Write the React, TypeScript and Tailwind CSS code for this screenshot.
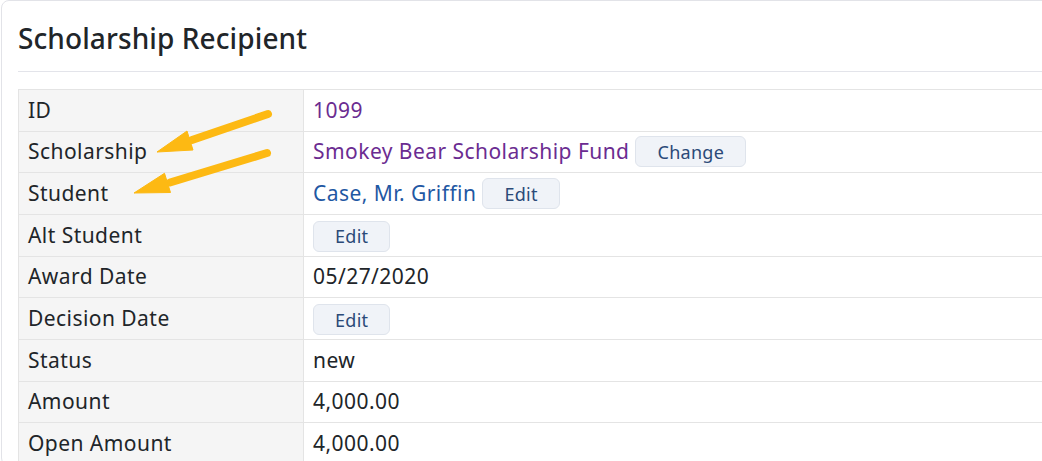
import React from 'react';

type Row = { label: string; value: React.ReactNode };

const EditButton = ({ children }: { children: React.ReactNode }) => (
  <button className="h-[31px] px-[21px] rounded-md border border-[#dfe4ec] bg-[#f0f3f8] text-[18px] leading-none tracking-[0.3px] text-[#2b4a78] align-middle">
    {children}
  </button>
);

const rows: Row[] = [
  { label: 'ID', value: <span className="text-[#6b2c91]">1099</span> },
  {
    label: 'Scholarship',
    value: (
      <span className="flex items-center gap-[6px]">
        <span className="text-[#6b2c91]">Smokey Bear Scholarship Fund</span>
        <EditButton>Change</EditButton>
      </span>
    ),
  },
  {
    label: 'Student',
    value: (
      <span className="flex items-center gap-[6px]">
        <span className="text-[#1f58a3]">Case, Mr. Griffin</span>
        <EditButton>Edit</EditButton>
      </span>
    ),
  },
  { label: 'Alt Student', value: <EditButton>Edit</EditButton> },
  { label: 'Award Date', value: '05/27/2020' },
  { label: 'Decision Date', value: <EditButton>Edit</EditButton> },
  { label: 'Status', value: 'new' },
  { label: 'Amount', value: '4,000.00' },
  { label: 'Open Amount', value: '4,000.00' },
];

const App = () => {
  return (
    <div className="relative w-[1042px] h-[461px] overflow-hidden bg-white font-['Noto_Sans',sans-serif] text-[#212529]">
      <div className="ml-[1px] w-[1100px] rounded-lg border border-[#e2e3e8] px-4 pt-[20px]">
        <h2 className="text-[28px] font-medium leading-[34px] tracking-[0.1px] pb-[16px] border-b border-[#e3e4ea]">
          Scholarship Recipient
        </h2>

        {/* Details table */}
        <table className="mt-[17px] w-full border-collapse text-[21px] tracking-[0.45px]">
          <tbody>
            {rows.map((row) => (
              <tr key={row.label} className="h-[41.66px]">
                <td className="w-[285px] border border-[#e4e4e4] bg-[#f5f5f5] px-[9px] py-0">{row.label}</td>
                <td className="border border-[#e4e4e4] px-[9px] py-0">{row.value}</td>
              </tr>
            ))}
          </tbody>
        </table>
      </div>

      {/* Annotation arrows */}
      <svg className="pointer-events-none absolute left-0 top-0" width="1042" height="461">
        <g fill="#fdb913" stroke="#fdb913">
          <line x1="268" y1="114" x2="192" y2="140" strokeWidth="8" strokeLinecap="round" />
          <polygon points="157,152 193,150 187,131" strokeWidth="1" strokeLinejoin="round" />
          <line x1="267" y1="153" x2="170" y2="182.5" strokeWidth="8" strokeLinecap="round" />
          <polygon points="134,193 170.5,192.5 164.5,173.3" strokeWidth="1" strokeLinejoin="round" />
        </g>
      </svg>
    </div>
  );
};

export default App;
